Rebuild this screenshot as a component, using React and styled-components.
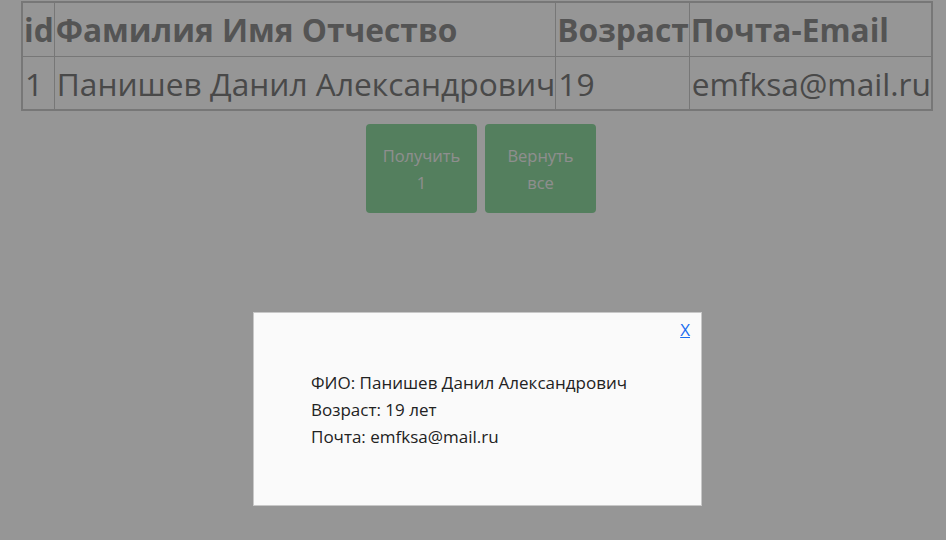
import React from 'react'
import styled, { createGlobalStyle } from 'styled-components'

const GlobalStyle = createGlobalStyle`
    body {
        margin: 0;
        background: #ffffff;
        font-family: "Open Sans", "Noto Sans", sans-serif;
    }
`

const Page = styled.div`
    padding: 1px 0 0 21px;
    min-height: 540px;
    box-sizing: border-box;
`

const Table = styled.table`
    border-collapse: collapse;
    border: 2px solid #cacaca;
    font-size: 31.7px;
    color: #7c7c7c;
`

const Head = styled.th`
    border: 1px solid #cacaca;
    padding: 0 0 0 1px;
    height: 53px;
    text-align: left;
    font-weight: 700;
    color: #909090;
`

const Cell = styled.td`
    border: 1px solid #cacaca;
    padding: 0 0 0 2px;
    height: 52px;
`

const Buttons = styled.div`
    display: flex;
    gap: 8px;
    margin: 13px 0 0 345px;
`

const Button = styled.button`
    width: 111px;
    height: 89px;
    border: none;
    border-radius: 4px;
    background: #8fd8a0;
    color: #f2f2f2;
    font-family: inherit;
    font-size: 16.5px;
    line-height: 27px;
    padding: 0 12px;
`

const Overlay = styled.div`
    position: fixed;
    inset: 0;
    background: rgba(0, 0, 0, 0.41);
`

const Modal = styled.div`
    position: fixed;
    left: 253px;
    top: 312px;
    width: 449px;
    height: 194px;
    box-sizing: border-box;
    background: #fafafa;
    border: 1px solid #c8c8c8;
    padding: 56px 20px 0 57px;
    color: #222;
    font-size: 17px;
    line-height: 27px;
`

const Close = styled.a`
    position: absolute;
    top: 3px;
    right: 11px;
    color: #1a6cf0;
    font-size: 17px;
    text-decoration: underline;
    cursor: pointer;
`

const users = [{ id: 1, name: 'Панишев Данил Александрович', age: 19, email: 'emfksa@mail.ru' }]

export default function App() {
    const user = users[0]
    return (
        <React.Fragment>
            <GlobalStyle />
            <Page>
                <Table>
                    <thead>
                        <tr>
                            <Head>id</Head>
                            <Head>Фамилия Имя Отчество</Head>
                            <Head>Возраст</Head>
                            <Head>Почта-Email</Head>
                        </tr>
                    </thead>
                    <tbody>
                        {users.map((u) => (
                            <tr key={u.id}>
                                <Cell>{u.id}</Cell>
                                <Cell>{u.name}</Cell>
                                <Cell>{u.age}</Cell>
                                <Cell>{u.email}</Cell>
                            </tr>
                        ))}
                    </tbody>
                </Table>
                <Buttons>
                    <Button>Получить 1</Button>
                    <Button>Вернуть все</Button>
                </Buttons>
            </Page>
            <Overlay />
            <Modal>
                <Close>X</Close>
                <div>ФИО: {user.name}</div>
                <div>Возраст: {user.age} лет</div>
                <div>Почта: {user.email}</div>
            </Modal>
        </React.Fragment>
    )
}
